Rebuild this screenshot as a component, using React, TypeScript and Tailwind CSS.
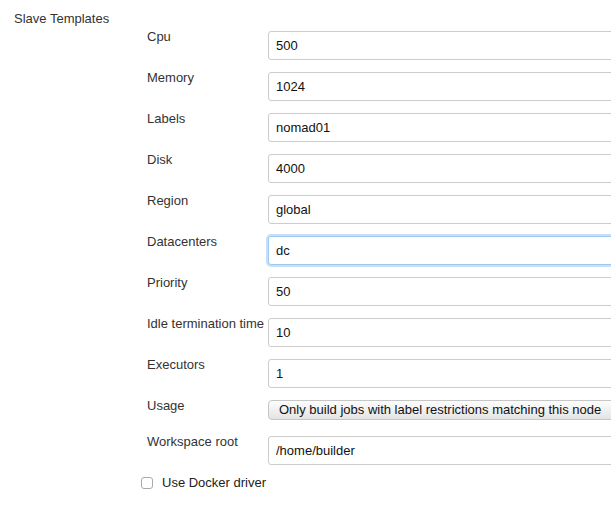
import { useState } from "react";

type Field = {
  label: string;
  value: string;
  focused?: boolean;
};

const fields: Field[] = [
  { label: "Cpu", value: "500" },
  { label: "Memory", value: "1024" },
  { label: "Labels", value: "nomad01" },
  { label: "Disk", value: "4000" },
  { label: "Region", value: "global" },
  { label: "Datacenters", value: "dc", focused: true },
  { label: "Priority", value: "50" },
  { label: "Idle termination time", value: "10" },
  { label: "Executors", value: "1" },
];

function TextRow({ field }: { field: Field }) {
  const [value, setValue] = useState(field.value);
  return (
    <div className="flex h-[41px] items-start">
      <div className="-mt-[2px] w-[121px] shrink-0 whitespace-nowrap leading-[15px]">{field.label}</div>
      <input
        value={value}
        onChange={(e) => setValue(e.target.value)}
        className={`h-[29px] w-[420px] shrink-0 rounded-[3px] border bg-white px-[7px] text-[13px] text-[#111] outline-none ${
          field.focused
            ? "border-[#9ec8ef] shadow-[0_0_0_2px_#c8e0f7]"
            : "border-[#ccc]"
        }`}
      />
    </div>
  );
}

export default function App() {
  return (
    <div
      className="h-[518px] w-[611px] overflow-hidden bg-white text-[13px] text-[#333]"
      style={{ fontFamily: '"Liberation Sans", Arial, sans-serif' }}
    >
      <div className="pl-[14px] pt-[11px] leading-[15px]">Slave Templates</div>

      <div className="mt-[5px] pl-[147px]">
        {fields.map((f) => (
          <TextRow key={f.label} field={f} />
        ))}

        <div className="flex h-[36px] items-start">
          <div className="-mt-[2px] w-[121px] shrink-0 leading-[15px]">Usage</div>
          <div className="flex h-[20px] w-[420px] shrink-0 items-center rounded-[4px] border border-[#c6c6c6] bg-gradient-to-b from-[#fdfdfd] to-[#e4e4e4] pl-[10px] text-[13px] text-[#111]">
            Only build jobs with label restrictions matching this node
          </div>
        </div>

        <TextRow field={{ label: "Workspace root", value: "/home/builder" }} />
      </div>

      <label className="ml-[141px] mt-[-2px] flex items-center gap-[9px] leading-[15px]">
        <span className="h-[12px] w-[12px] rounded-[3px] border border-[#aaa] bg-white" />
        <span className="text-[#222]">Use Docker driver</span>
      </label>
    </div>
  );
}
